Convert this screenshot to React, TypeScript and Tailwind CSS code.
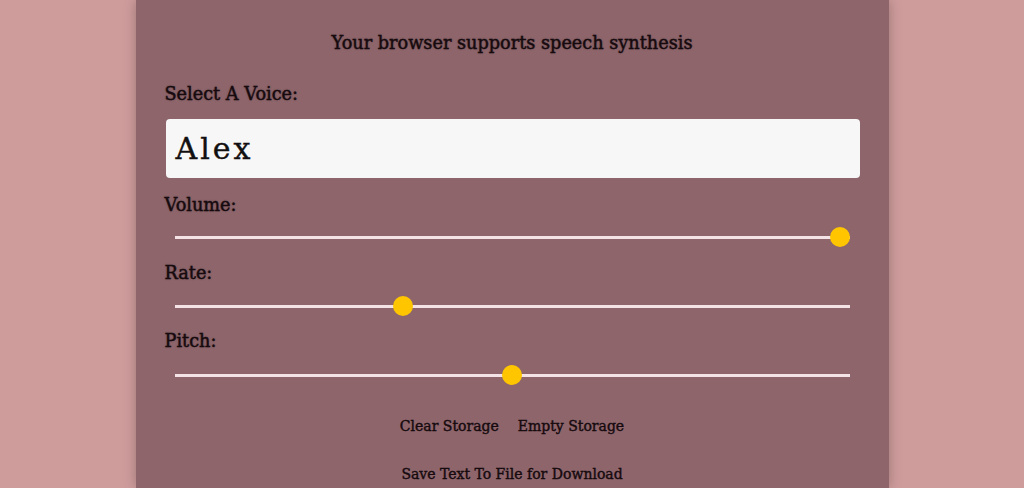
import React from "react";

const font = { fontFamily: '"Roboto Slab", "DejaVu Serif", serif' };

function Slider({ pct }: { pct: number }) {
  return (
    <div className="relative mx-[10px] h-[20px]">
      <div className="absolute left-0 right-0 top-[9px] h-[3px] bg-[#f3e3e6]" />
      <div
        className="absolute top-[0px] h-[20px] w-[20px] rounded-full bg-[#ffc600]"
        style={{ left: `calc(${pct * 100}% - ${pct * 20}px)` }}
      />
    </div>
  );
}

export default function App() {
  return (
    <div className="min-h-[488px] w-full bg-[#cf9c9c] flex justify-center overflow-hidden" style={font}>
      <div className="w-[753px] h-[488px] bg-[#8d656b] shadow-[0_0_12px_rgba(0,0,0,0.25)] px-[29px] pt-[30px] text-[#160a0e] [text-shadow:0_0_2px_rgba(0,0,0,0.35)] [-webkit-text-stroke:0.4px_#160a0e]">
        <div className="text-center text-[17.7px] leading-[26px]">Your browser supports speech synthesis</div>
        <div className="mt-[26px] text-[17.7px] leading-[24px]">Select A Voice:</div>
        <div className="mt-[13px] ml-[1px] h-[59px] rounded-[4px] bg-[#f7f7f7] flex items-center px-[10px] text-[30px] tracking-[3px] text-[#111] [text-shadow:none]">
          Alex
        </div>
        <div className="mt-[15px] text-[17.7px] leading-[24px]">Volume:</div>
        <div className="mt-[10px]"><Slider pct={1} /></div>
        <div className="mt-[14px] text-[17.7px] leading-[24px]">Rate:</div>
        <div className="mt-[11px]"><Slider pct={0.333} /></div>
        <div className="mt-[13px] text-[17.7px] leading-[24px]">Pitch:</div>
        <div className="mt-[12px]"><Slider pct={0.5} /></div>
        <div className="mt-[31px] flex justify-center gap-[19px] text-[14px] leading-[20px] [text-shadow:none]">
          <span>Clear Storage</span>
          <span>Empty Storage</span>
        </div>
        <div className="mt-[28px] text-center text-[14px] leading-[20px] [text-shadow:none]">Save Text To File for Download</div>
      </div>
    </div>
  );
}
